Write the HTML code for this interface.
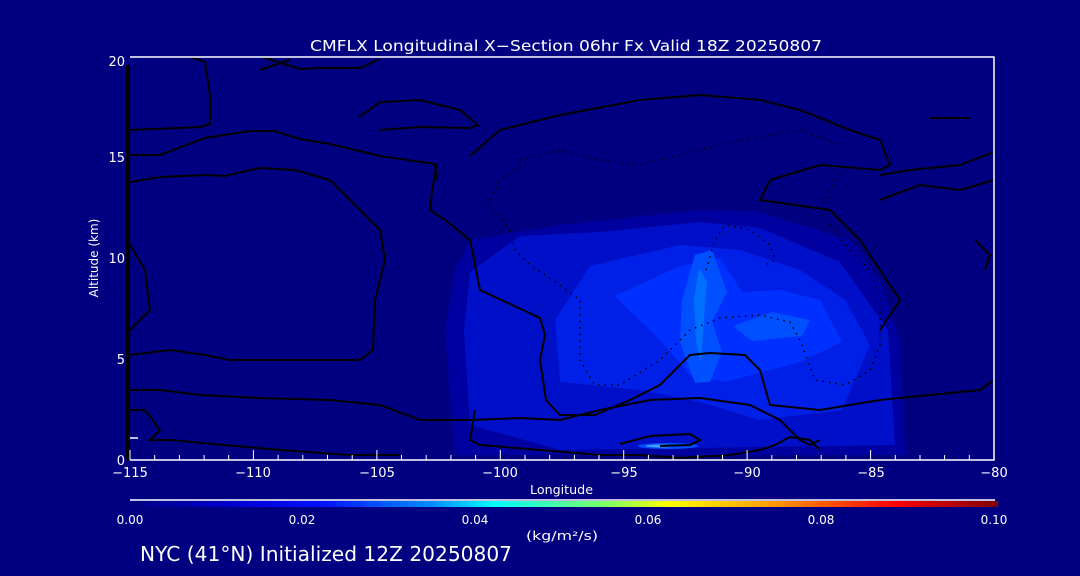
<!DOCTYPE html>
<html><head><meta charset="utf-8"><style>
html,body{margin:0;padding:0;background:#000080;}
svg{display:block;}
text{font-family:"DejaVu Sans","Liberation Sans",sans-serif;fill:#fff;}
</style></head><body>
<svg width="1080" height="576" viewBox="0 0 1080 576" xmlns="http://www.w3.org/2000/svg">
<defs>
<linearGradient id="cb" x1="0" x2="1" y1="0" y2="0">
<stop offset="0" stop-color="#000080"/>
<stop offset="0.12" stop-color="#0000d0"/>
<stop offset="0.22" stop-color="#0010ff"/>
<stop offset="0.35" stop-color="#0090ff"/>
<stop offset="0.42" stop-color="#00ffff"/>
<stop offset="0.55" stop-color="#80ff60"/>
<stop offset="0.62" stop-color="#ffff00"/>
<stop offset="0.75" stop-color="#ff9000"/>
<stop offset="0.88" stop-color="#ff0000"/>
<stop offset="1" stop-color="#800000"/>
</linearGradient>
</defs>
<rect width="1080" height="576" fill="#000080"/>
<g stroke="none">
<polygon fill="#0000a0" points="470,240 560,225 700,210 760,212 850,240 880,280 900,340 905,455 455,455 445,330 455,270"/>
<polygon fill="#0010c8" points="470,272 520,236 600,232 700,222 760,228 840,262 888,330 895,445 560,450 470,425 464,330"/>
<polygon fill="#0020e8" points="555,320 590,266 680,245 740,250 800,270 845,300 870,345 842,410 760,420 700,402 640,390 560,382"/>
<polygon fill="#0030ff" points="615,296 680,266 720,258 742,292 780,290 820,300 842,342 800,362 725,382 690,375 662,342"/>
<polygon fill="#0050ff" points="682,300 695,255 712,250 727,292 712,322 722,352 710,382 695,383 680,342"/>
<polygon fill="#0050ff" points="733,326 772,312 810,320 802,336 752,341"/>
<polygon fill="#0070ff" points="694,300 699,268 707,282 704,320 701,362 696,342"/>
<ellipse cx="668" cy="446" rx="30" ry="3" fill="#0050ff"/>
<ellipse cx="660" cy="446" rx="14" ry="1.5" fill="#40a0ff"/>
</g>
<g fill="none" stroke="#000" stroke-width="2">
<polyline points="130,130 200,127 210,124 210,95 205,62 190,57"/>
<polyline points="262,57 300,69 320,68 360,68 380,59"/>
<polyline points="130,155 160,155 205,138 250,131 275,131 300,139 330,144 380,156 435,164 437,180"/>
<polyline points="130,182 160,177 205,175 225,176 250,170 260,168 295,170 330,180 350,200 380,230 385,260 375,300 373,350 360,360 300,360 230,360 205,355 170,350 130,355"/>
<polyline points="437,164 432,190 430,210 445,220 470,240 480,290 540,318 545,335 540,360 546,400 560,415 595,415 630,400 660,385 690,355 710,353 745,355 760,370 770,405 820,410 880,400 930,395 980,390 994,380"/>
<polyline points="130,245 145,270 150,310 130,330"/>
<polyline points="130,390 160,390 200,395 260,398 330,400 380,405 420,420 470,420 520,418 560,420 600,410 650,400 700,398 750,405 780,420 800,440 810,445 820,440"/>
<polyline points="130,410 145,410 160,430 150,440 170,440 280,450 350,455 400,455"/>
<polyline points="475,410 470,440 480,445 540,450 600,455 640,455 680,458 730,455 760,450 775,445 790,437 810,440 820,450"/>
<polyline points="620,444 650,436 690,434 700,440 690,445 660,446"/>
<polyline points="359,117 380,102 420,100 460,110 478,125 470,128 420,127 380,130"/>
<polyline points="470,156 500,130 560,115 640,100 700,95 760,100 800,110 850,130 880,140 890,165 880,170 820,165 770,180 760,200 830,210 860,240 880,270 900,300 880,330"/>
<polyline points="880,175 910,170 960,165 994,152"/>
<polyline points="880,200 920,185 960,190 994,180"/>
<polyline points="260,70 290,60"/>
<polyline points="930,118 970,118"/>
<polyline points="975,240 990,255 985,270"/>
<polyline points="128,65 128,460" stroke-width="4"/>
</g>
<g fill="none" stroke="#000" stroke-width="1.5" stroke-dasharray="1.5,5">
<polyline points="520,160 560,150 600,160 640,165 700,150 740,140 800,130 840,145"/>
<polyline points="485,200 510,230 515,250 530,265 560,285 580,300 580,360 595,385 620,385 660,360 690,330 720,318 760,315 790,322 800,340 815,380 845,385 870,370 880,345 880,300 870,270 850,250 835,230 820,210 840,170"/>
<polyline points="490,200 500,180 530,160"/>
<polyline points="706,270 715,240 725,225 750,230 770,245 775,260 765,265"/>
</g>
<g stroke="#fff" stroke-width="1.5" fill="none">
<polyline points="130,57 994,57 994,460 130,460"/>
<line x1="130" y1="438" x2="138" y2="438"/>
</g>
<g stroke="#fff" stroke-width="1">
<line x1="130" y1="460" x2="130" y2="450"/><line x1="154.7" y1="460" x2="154.7" y2="455"/><line x1="179.4" y1="460" x2="179.4" y2="455"/><line x1="204.1" y1="460" x2="204.1" y2="455"/><line x1="228.7" y1="460" x2="228.7" y2="455"/>
<line x1="253.4" y1="460" x2="253.4" y2="450"/><line x1="278.1" y1="460" x2="278.1" y2="455"/><line x1="302.8" y1="460" x2="302.8" y2="455"/><line x1="327.5" y1="460" x2="327.5" y2="455"/><line x1="352.2" y1="460" x2="352.2" y2="455"/>
<line x1="376.9" y1="460" x2="376.9" y2="450"/><line x1="401.5" y1="460" x2="401.5" y2="455"/><line x1="426.2" y1="460" x2="426.2" y2="455"/><line x1="450.9" y1="460" x2="450.9" y2="455"/><line x1="475.6" y1="460" x2="475.6" y2="455"/>
<line x1="500.3" y1="460" x2="500.3" y2="450"/><line x1="525" y1="460" x2="525" y2="455"/><line x1="549.7" y1="460" x2="549.7" y2="455"/><line x1="574.4" y1="460" x2="574.4" y2="455"/><line x1="599" y1="460" x2="599" y2="455"/>
<line x1="623.7" y1="460" x2="623.7" y2="450"/><line x1="648.4" y1="460" x2="648.4" y2="455"/><line x1="673.1" y1="460" x2="673.1" y2="455"/><line x1="697.8" y1="460" x2="697.8" y2="455"/><line x1="722.5" y1="460" x2="722.5" y2="455"/>
<line x1="747.1" y1="460" x2="747.1" y2="450"/><line x1="771.8" y1="460" x2="771.8" y2="455"/><line x1="796.5" y1="460" x2="796.5" y2="455"/><line x1="821.2" y1="460" x2="821.2" y2="455"/><line x1="845.9" y1="460" x2="845.9" y2="455"/>
<line x1="870.6" y1="460" x2="870.6" y2="450"/><line x1="895.3" y1="460" x2="895.3" y2="455"/><line x1="920" y1="460" x2="920" y2="455"/><line x1="944.6" y1="460" x2="944.6" y2="455"/><line x1="969.3" y1="460" x2="969.3" y2="455"/>
</g>
<g font-size="13" text-anchor="middle">
<text x="130" y="477">−115</text><text x="253" y="477">−110</text><text x="377" y="477">−105</text><text x="500" y="477">−100</text><text x="624" y="477">−95</text><text x="747" y="477">−90</text><text x="871" y="477">−85</text><text x="994" y="477">−80</text>
</g>
<g font-size="13" text-anchor="end">
<text x="125" y="465">0</text><text x="125" y="364">5</text><text x="125" y="263">10</text><text x="125" y="162">15</text><text x="125" y="66">20</text>
</g>
<text x="310" y="51" font-size="15" textLength="512" lengthAdjust="spacingAndGlyphs">CMFLX Longitudinal X−Section 06hr  Fx Valid 18Z 20250807</text>
<text x="530" y="494" font-size="12" textLength="63" lengthAdjust="spacingAndGlyphs">Longitude</text>
<text transform="translate(98,258) rotate(-90)" font-size="12" text-anchor="middle">Altitude (km)</text>
<line x1="130" y1="500" x2="995" y2="500" stroke="#fff" stroke-width="1.5"/>
<rect x="130" y="501" width="868" height="6" fill="url(#cb)"/>
<g font-size="12" text-anchor="middle">
<text x="130" y="524">0.00</text><text x="302" y="524">0.02</text><text x="475" y="524">0.04</text><text x="648" y="524">0.06</text><text x="821" y="524">0.08</text><text x="994" y="524">0.10</text>
</g>
<text x="526" y="540" font-size="12" textLength="72" lengthAdjust="spacingAndGlyphs">(kg/m²/s)</text>
<text x="140" y="561" font-size="20" textLength="372" lengthAdjust="spacingAndGlyphs">NYC (41°N) Initialized 12Z 20250807</text>
</svg>
</body></html>
